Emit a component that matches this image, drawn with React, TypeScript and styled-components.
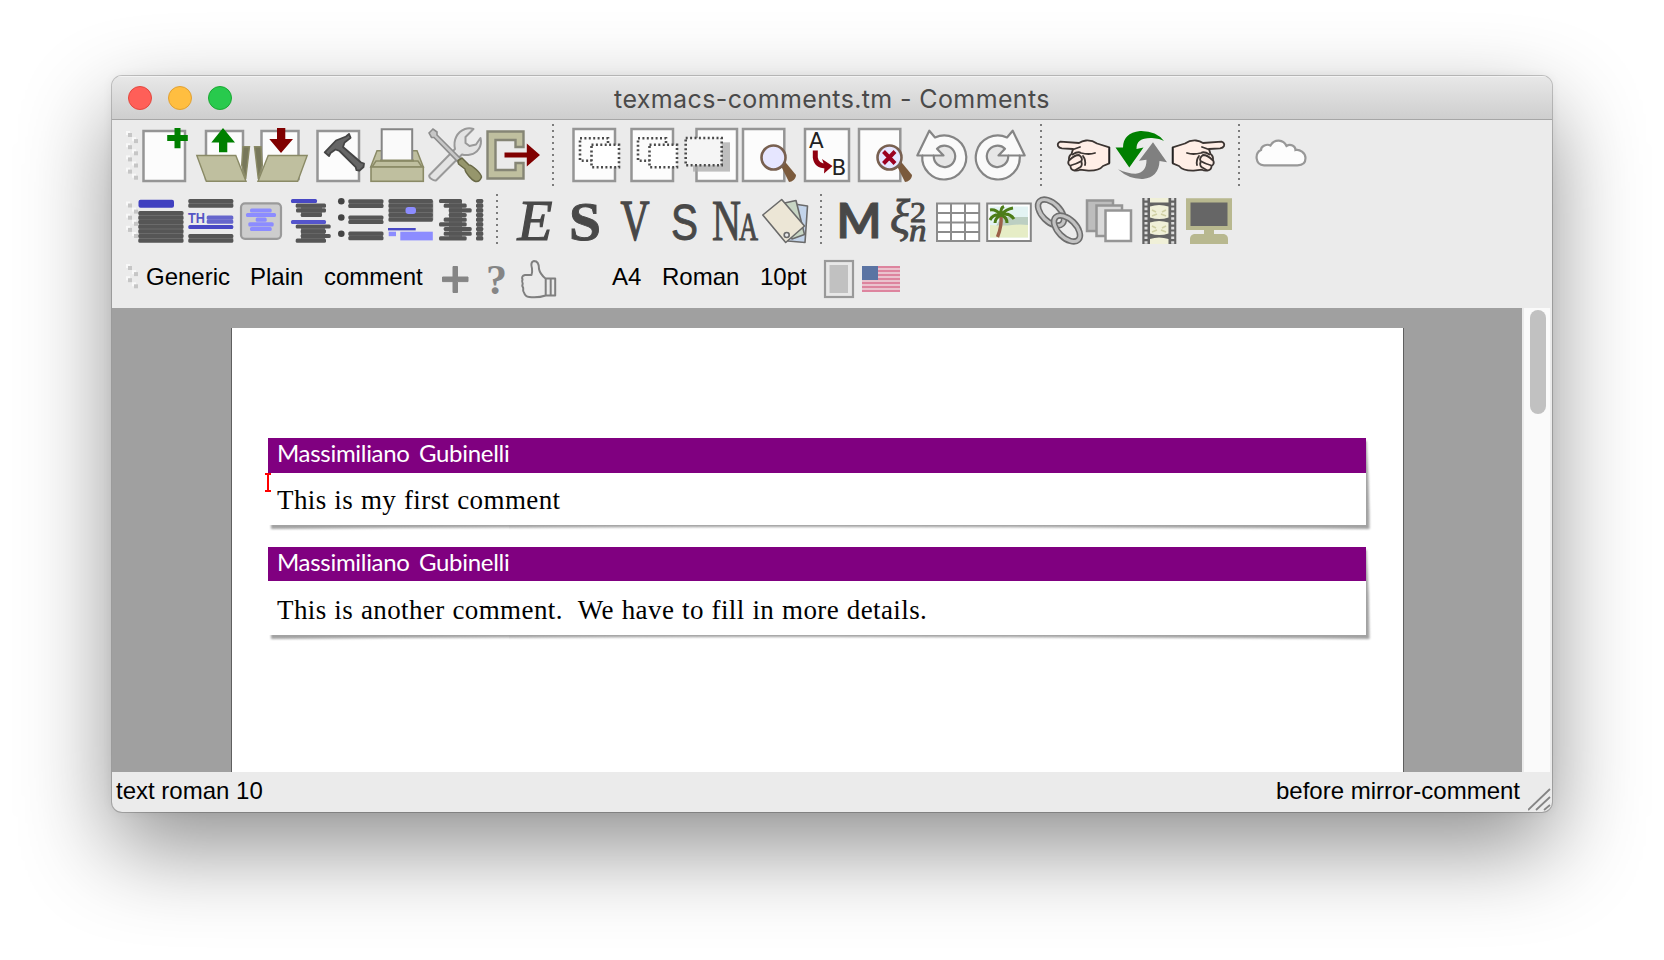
import React from 'react';
import styled, { createGlobalStyle } from 'styled-components';

const GlobalStyle = createGlobalStyle`
  body { margin: 0; background: #fff; }
  #root { height: 960px; overflow: hidden; }
  svg { display: block; flex: none; }
`;

const sans = `'Liberation Sans', Arial, sans-serif`;

const Desktop = styled.div`
  box-sizing: border-box;
  width: 1664px;
  height: 960px;
  padding: 76px 112px 0;
  overflow: hidden;
  background: #fff;
`;

const Window = styled.div`
  display: flex;
  flex-direction: column;
  width: 1440px;
  height: 736px;
  border-radius: 10px;
  overflow: hidden;
  background: #ebebeb;
  box-shadow: 0 0 0 1px rgba(0, 0, 0, 0.2), 0 36px 90px rgba(0, 0, 0, 0.44), 0 0 12px rgba(0, 0, 0, 0.06);
`;

const TitleBar = styled.div`
  flex: none;
  box-sizing: border-box;
  display: grid;
  grid-template-columns: 200px 1fr 200px;
  align-items: center;
  height: 44px;
  background: linear-gradient(#e8e8e8, #cecece);
  border-bottom: 1px solid #a6a6a6;
  box-shadow: inset 0 1px 0 #f3f3f3;
`;

const Lights = styled.div`
  display: flex;
  gap: 16px;
  padding-left: 16px;
`;

const Light = styled.span<{ $fill: string; $edge: string }>`
  box-sizing: border-box;
  width: 24px;
  height: 24px;
  border-radius: 50%;
  background: ${(p) => p.$fill};
  border: 1px solid ${(p) => p.$edge};
`;

const Title = styled.div`
  padding-top: 2px;
  text-align: center;
  white-space: nowrap;
  font: 400 25px/30px Inter, sans-serif;
  letter-spacing: 0.38px;
  color: #4a4a4a;
`;

const ToolRow = styled.div<{ $height: number; $icon: number }>`
  flex: none;
  box-sizing: border-box;
  display: flex;
  align-items: flex-start;
  height: ${(p) => p.$height}px;
  padding-top: 8px;
  svg.tool { width: ${(p) => p.$icon}px; height: ${(p) => p.$icon}px; overflow: visible; }
`;

const IconGroup = styled.div`
  display: flex;
  gap: 4px;
`;

const Divider = styled.div<{ $height: number }>`
  width: 2px;
  height: ${(p) => p.$height}px;
  margin: -4px 14px 0 12px;
  background: repeating-linear-gradient(#7c7c7c 0 2px, transparent 2px 6px);
`;

const MenuLabel = styled.div<{ $width: number }>`
  width: ${(p) => p.$width}px;
  font: 24px/34px ${sans};
  letter-spacing: 0;
  color: #000;
  white-space: nowrap;
`;

const Workspace = styled.div`
  flex: none;
  display: flex;
  height: 464px;
`;

const Canvas = styled.div`
  width: 1410px;
  box-sizing: border-box;
  padding: 20px 0 0 119px;
  background: #a0a0a0;
`;

const Page = styled.div`
  box-sizing: border-box;
  display: flex;
  flex-direction: column;
  gap: 22px;
  width: 1173px;
  height: 444px;
  padding: 110px 37px 0 36px;
  background: #fff;
  border: solid #5f5f5f;
  border-width: 0 1px;
`;

const Comment = styled.article<{ $height: number }>`
  position: relative;
  z-index: 0;
  height: ${(p) => p.$height}px;
`;

const Shade = styled.svg`
  position: absolute;
  z-index: -1;
  left: 0;
  top: 0;
  overflow: visible;
`;

const Author = styled.header<{ $height: number }>`
  box-sizing: border-box;
  height: ${(p) => p.$height}px;
  padding-left: 9px;
  background: #800080;
  color: #fff;
  font: 24px/30px Lato, sans-serif;
  letter-spacing: -0.3px;
  word-spacing: 3.5px;
`;

const Body = styled.div<{ $height: number; $padTop: number }>`
  box-sizing: border-box;
  height: ${(p) => p.$height}px;
  padding: ${(p) => p.$padTop}px 0 0 9px;
  background: #fff;
  color: #000;
  font: 27px/32px 'Liberation Serif', 'Times New Roman', serif;
  letter-spacing: 0.4px;
  word-spacing: 0.6px;
  white-space: pre;
`;

const Caret = styled.svg`
  position: absolute;
  left: -3px;
  top: 35px;
`;

const ScrollTrack = styled.div`
  width: 26px;
  box-sizing: border-box;
  margin-left: 2px;
  padding: 2px 4px 0 6px;
  background: #fafafa;
`;

const ScrollThumb = styled.div`
  width: 16px;
  height: 104px;
  border-radius: 8px;
  background: #c1c1c1;
`;

const StatusBar = styled.footer`
  flex: none;
  display: flex;
  justify-content: space-between;
  height: 40px;
  padding-left: 4px;
  font: 24px/38px ${sans};
  color: #000;
`;

const StatusRight = styled.div`
  display: flex;
  gap: 8px;
`;

const Tool = ({ size = 54, children }: { size?: number; children: React.ReactNode }) => (
  <svg className="tool" viewBox={`0 0 ${size} ${size}`}>{children}</svg>
);

const Grip = ({ rows, top }: { rows: number; top: number }) => (
  <svg width="26" height="54" viewBox="0 0 26 54">
    {Array.from({ length: rows }, (_, i) => {
      const x = i % 2 ? 22 : 16;
      const y = top + i * 6.1;
      return (
        <g key={i}>
          <rect x={x - 2} y={y - 2} width="4" height="4" fill="#f8f8f8" />
          <rect x={x} y={y} width="4" height="4" fill="#c6c6c6" />
        </g>
      );
    })}
  </svg>
);

const Sheet = ({ x = 5, y = 1.5, w = 42, h = 51.5, fill = '#fcfcfc' }) => (
  <rect x={x} y={y} width={w} height={h} fill={fill} stroke="#959595" strokeWidth="2.500" />
);

const khaki = '#bfbf9f';
const khakiEdge = '#8a8a66';

const NewIcon = () => (
  <Tool>
    <Sheet x={5.5} y={3} w={41.5} h={50} />
    <path d="M36.5 0h6v7h7.3v6h-7.3v7.3h-6V13h-7.3V7h7.3z" fill="#008000" />
  </Tool>
);

const Folder = () => (
  <g stroke={khakiEdge} strokeWidth="1.4">
    <path d="M47 18.7h6.5L49.7 51l-4-14z" fill="#77775a" />
    <path d="M.8 27.5h39L50 53.2H10.3z" fill={khaki} />
  </g>
);

const OpenIcon = () => (
  <Tool>
    <Sheet x={10} y={3} w={37} h={48} />
    <Folder />
    <path d="M27 0 39 14.5h-7.7v9.8H23v-9.8h-7.7z" fill="#008000" />
  </Tool>
);

const SaveIcon = () => (
  <Tool>
    <Sheet x={7.5} y={3} w={37} h={48} />
    <g transform="translate(54 0) scale(-1 1)"><Folder /></g>
    <path d="M23 0h8.3v11H39L27 25 15.3 11H23z" fill="#800000" />
  </Tool>
);

const BuildIcon = () => (
  <Tool>
    <Sheet x={5.5} y={3} w={41.5} h={50} />
    <path d="M12.7 24.3 24 12.5l10-4 3-2.6 1.6 4-6 4.6L31 19l18 15.500 3 1-.5 3.5-4 3.700-3-.5-.8-3L27.500 23l-4-1.500-5 3.500-1.500 3z" fill="#666" stroke="#454545" strokeWidth="1.8" strokeLinejoin="round" />
  </Tool>
);

const PrintIcon = () => (
  <Tool>
    <path d="M7 22.700h40L53.300 39H.7z" fill={khaki} stroke={khakiEdge} strokeWidth="1.500" />
    <path d="M6 33h42l4 6H2z" fill={khaki} stroke={khakiEdge} strokeWidth="1.500" />
    <path d="M11.700 33V1.200h30.500V33" fill="#fafafa" stroke="#858585" strokeWidth="2" />
    <path d="M10 32.500h34" stroke={khakiEdge} strokeWidth="2" />
    <rect x="1" y="39" width="52.300" height="14.300" fill={khaki} stroke={khakiEdge} strokeWidth="1.600" />
  </Tool>
);

const PrefsIcon = () => (
  <Tool>
    <path d="M1.500 47 27 21c-2-9 2-17 10-20 3-1 6-.8 8.500 0L37.500 9v6l4 3 6.500-1.500L52.500 10c2 8-3 15-10 16.500-3 .8-6 .8-8.500 0L8.500 52c-2 2-9-3-7-5z" fill="#e3e3e3" stroke="#999" strokeWidth="2" strokeLinejoin="round" />
    <path d="M1 5 5 1l4 3v3l25 25-3 3L6 9.500H3.500z" fill="#c6c6c6" stroke="#8c8c8c" strokeWidth="1.600" />
    <path d="M30 32.500 34 30l7 7c3 0 12 8 12.500 12-1 3-3 5-6 4.500C43 52 37 44 37 41l-6.500-5z" fill="#96966c" stroke="#696947" strokeWidth="1.500" strokeLinejoin="round" />
  </Tool>
);

const ExitIcon = () => (
  <Tool>
    <path d="M1.500 3.500h36V19h-8v-7H9.500v30h20v-7h8v15.500h-36z" fill={khaki} stroke="#858575" strokeWidth="2.400" />
    <path d="M18.500 24.500h22.300V15.500L54 27 40.800 38.500v-9H18.500z" fill="#800000" />
  </Tool>
);

const CopyIcon = () => (
  <Tool>
    <Sheet x={5.5} y={1} w={41.500} h={52} />
    <g strokeDasharray="2 2.400" strokeWidth="2.600" stroke="#4a4a4a">
      <rect x="12" y="10.200" width="28" height="22.500" fill="none" />
      <rect x="23.500" y="16.800" width="27.500" height="22.500" fill="#fff" />
    </g>
  </Tool>
);

const PasteIcon = () => (
  <Tool>
    <Sheet x={12.500} y={1} w={40.500} h={52} />
    <rect x="9" y="14.300" width="37" height="29.300" fill="#aaa" fillOpacity=".75" />
    <rect x="1.700" y="10" width="36" height="27.300" fill="#f5f5f5" stroke="#4a4a4a" strokeWidth="2.600" strokeDasharray="2 2.400" />
  </Tool>
);

const Lens = () => (
  <>
    <path d="m38 36 4-3.500L54 47c0 4-4 7-7 7z" fill="#7b5a3c" />
    <circle cx="31.500" cy="29.500" r="12" fill="#e6e6ff" stroke="#786050" strokeWidth="2.600" />
  </>
);

const FindIcon = () => (
  <Tool><Sheet x={1} y={1} w={41.300} h={52} /><Lens /></Tool>
);

const FindOffIcon = () => (
  <Tool>
    <Sheet x={1} y={1} w={41.300} h={52} />
    <Lens />
    <path d="m25.500 23.500 11.500 12m0-12-11.500 12" stroke="#9b0020" strokeWidth="4" />
  </Tool>
);

const ReplaceIcon = () => (
  <Tool>
    <Sheet x={5} y={1} w={44} h={52} />
    <text x="9" y="19.700" fontFamily="DejaVu Sans, sans-serif" fontSize="21.500" fill="#222">A</text>
    <text x="31.500" y="46.800" fontFamily="DejaVu Sans, sans-serif" fontSize="21.500" fill="#222">B</text>
    <path d="M15.300 22.500v7q1 8.500 11 8.500" fill="none" stroke="#900010" strokeWidth="5" />
    <path d="m22 31 10.500 7-8.500 7.500.5-7.500z" fill="#900010" />
  </Tool>
);

const Turn = () => (
  <g stroke="#858585" strokeWidth="2.200" strokeLinejoin="round">
    <path d="M13.300 2.700 19 9.500A22 22 0 1 1 6.300 27.500H1.300z" fill="#fafafa" />
    <path d="M21 20.700A10.700 10.700 0 1 1 17.800 27.500H27.500z" fill="#e6e6e6" />
    <path d="M6 27.500h12" />
  </g>
);

const UndoIcon = () => <Tool><Turn /></Tool>;
const RedoIcon = () => <Tool><g transform="translate(52 0) scale(-1 1)"><Turn /></g></Tool>;

const Hand = () => (
  <g stroke="#3c3532" strokeWidth="1.800" fill="#ffeee6" strokeLinejoin="round" strokeLinecap="round">
    <path d="M53.300 19.300 41 15.500Q36 12 30 12.500q-4 .5-7 2.500L4.500 13.700Q1 15 2 18q1 2 4 2.300L17 21l-1.500 5q-3 2-2.500 6-2 4 1.500 6 0 4 4 4.500 3 .5 5.500-.8l8.300 1Q43 43 47 38l6.300-2.700z" />
    <path d="M17 21.500 24 19m-7.500 7.500Q22 23 25 25q8 2 14 0M13.500 32q5-5 9.500-5 4 3 2.500 6-5 3-11 4.500M25.500 34q1 3-1 5l-5 3M27 28q3 4 2 9" fill="none" />
  </g>
);

const BackIcon = () => <Tool><Hand /><path d="M53.300 19.300v16" stroke="#222" strokeWidth="1.600" /></Tool>;
const ForwardIcon = () => (
  <Tool>
    <g transform="translate(54 0) scale(-1 1)"><Hand /><path d="M53.300 19.300v16" stroke="#222" strokeWidth="1.600" /></g>
  </Tool>
);

const RefreshIcon = () => (
  <Tool>
    <path d="M50 13Q42 2.500 26 3 9 5 9 19.500H1.500l13.800 20L29.500 19.500l-7 1.500Q22 9.500 38 10q8 .5 12 3z" fill="#008000" />
    <path d="M4 41.300Q15 51.500 29 51q16-2 16.500-18l7.500 1.200-14-20-14 18.500 7.500-1q0 13-11 14-8 0-17.500-4.400z" fill="#808080" />
  </Tool>
);

const CloudIcon = () => (
  <Tool>
    <path d="M10 37.300C1 37 .5 25 7 22c0-4 6-6.500 9.500-4.500 4-7 13-6 16 .5 4-2.500 9 0 9 4 4-1 10 2.500 10 8 0 5-3 7.300-8 7.300z" fill="#fdfdfd" stroke="#989898" strokeWidth="2.200" />
  </Tool>
);

type Bar = [number, number, number, string?];
const dark = '#565656';
const blue = '#4848c4';
const pale = '#8c8cff';

const Bars = ({ items }: { items: Bar[] }) => (
  <>
    {items.map(([x1, x2, y, fill = dark], i) => (
      <rect key={i} x={x1} y={y - 2.100} width={x2 - x1} height="4.200" rx="1.500" fill={fill} />
    ))}
  </>
);

const Block = ({ x = 0.8, y, w = 44.400, h }: { x?: number; y: number; w?: number; h: number }) => (
  <rect x={x} y={y} width={w} height={h} fill="#808080" />
);

const TitleIcon = () => (
  <Tool size={46}>
    <rect x=".5" y="1.800" width="35.500" height="8" rx="2" fill="#4040c0" />
    <Block y={15} h={28} />
    <Bars items={[15, 19.7, 24, 28.7, 33.3, 38, 42.7].map((y): Bar => [0.3, 45.5, y])} />
  </Tool>
);

const TheoremIcon = () => (
  <Tool size={46}>
    <Block y={3} h={5} /><Block y={38} h={5} />
    <Bars items={[[0.3, 45.300, 3], [0.3, 45.300, 7.700], [18.700, 45.300, 19.700, '#6666cc'], [18.700, 45.300, 23.700, '#6666cc'], [0.3, 45.300, 29, blue], [0.3, 45.300, 38], [0.3, 45.300, 42.700]]} />
    <text x="0" y="24.800" textLength="17" lengthAdjust="spacingAndGlyphs" fontFamily="Liberation Sans" fontWeight="700" fontSize="14.500" fill="#5555c4">TH</text>
  </Tool>
);

const CenterIcon = () => (
  <Tool size={46}>
    <rect x="3" y="5.300" width="40" height="35.500" rx="4" fill="#cdcdcd" stroke="#9a9a9a" strokeWidth="2.200" />
    <Bars items={[[12, 33.700, 12.500, pale], [8, 38, 17, pale], [17.700, 28.700, 21.700, pale], [10.300, 35.700, 26.300, pale], [12, 33.700, 31, pale]]} />
  </Tool>
);

const OutlineIcon = () => (
  <Tool size={46}>
    <rect x="13" y="7" width="21" height="10" fill="#777" />
    <rect x="13" y="28" width="24" height="14" fill="#777" />
    <Bars items={[[3, 29, 3, blue], [7.700, 38, 7.700], [8, 38, 12.300], [12.700, 34, 17], [3, 38, 24, '#5555cc'], [7.700, 42.700, 28.500], [12.700, 38, 33.300], [12.700, 42.700, 38], [7.700, 38, 42.700]]} />
  </Tool>
);

const ListIcon = () => (
  <Tool size={46}>
    {[3.300, 19.500, 35.700].map((y) => (
      <g key={y}>
        <circle cx="3.300" cy={y} r="3.300" fill="#444" />
        <Block x={11} w={34} y={y} h={5} />
        <Bars items={[[10.300, 45.500, y], [10.300, 45.500, y + 4.500]]} />
      </g>
    ))}
  </Tool>
);

const FigureIcon = () => (
  <Tool size={46}>
    <Block y={3} h={19} />
    <Bars items={[3, 7.700, 12.300, 17, 21.700].map((y): Bar => [0.5, 44.800, y])} />
    <rect x="17.500" y="9" width="10.500" height="7" rx="3" fill={pale} />
    <rect x="0" y="30" width="27.700" height="2.400" fill={blue} />
    <rect x=".7" y="33.700" width="7.300" height="4.500" fill={pale} />
    <rect x="12.300" y="33.700" width="32.500" height="8.700" fill={pale} />
  </Tool>
);

const MarginIcon = () => (
  <Tool size={46}>
    <rect x="11" y="3" width="13" height="37" fill="#777" />
    <rect x="39" y="3" width="5.500" height="37" fill="#888" />
    <Bars items={[[1, 24, 3], [5.700, 28.700, 7.700], [10.700, 33.700, 12.300], [10.700, 28.700, 17], [5.700, 28.700, 21.700], [1, 28.700, 26.300], [5.700, 33.700, 31], [5.700, 33.700, 35.700], [1, 28.700, 40.300], ...[3, 7.700, 12.300, 17, 21.700, 26.300, 31, 35.700, 40.300].map((y): Bar => [38, 45.300, y])]} />
  </Tool>
);

interface GlyphProps {
  text: string; x: number; width: number; size: number; y?: number;
  family?: string; weight?: number; slant?: string; bold?: number;
}
const Glyph = ({ text, x, width, size, y = 42, family = 'Liberation Serif', weight = 400, slant = 'normal', bold = 0.9 }: GlyphProps) => (
  <text x={x} y={y} textLength={width} lengthAdjust="spacingAndGlyphs" fontFamily={family} fontSize={size} fontWeight={weight} fontStyle={slant} fill="#484848" stroke="#484848" strokeWidth={bold}>{text}</text>
);

const TagsIcon = () => (
  <Tool size={46}>
    <g stroke="#6a6a6a" strokeWidth="1.600" strokeLinejoin="round">
      <path d="m32 6 13.500 2L43 44.500 26 43z" fill="#c3d4ea" />
      <path d="m18 6 16-3.500 8.500 34L30 41z" fill="#c8d6c4" />
      <path d="M.8 17 19.700 1.500 42.500 28 23.700 44.500z" fill="#ece6d6" />
      <circle cx="24.700" cy="37" r="2.500" fill="#ebebeb" />
    </g>
  </Tool>
);

const TableIcon = () => (
  <Tool size={46}>
    <path d="M1 5.500h42.200V43H1zM15 5v38M29 5v38M1 15h42M1 24.500h42M1 34h42" fill="#fff" stroke="#8c8c8c" strokeWidth="2" />
  </Tool>
);

const PictureIcon = () => (
  <Tool size={46}>
    <rect x="1.200" y="5.500" width="43.600" height="37.500" fill="#fff" stroke="#858585" strokeWidth="2" />
    <path d="M4 8.500h38v31H4z" fill="#e3f3f3" />
    <path d="M15 19h27v11H9z" fill="#bccfc2" />
    <path d="M4 27q15 1 22 0 8-1 16 0v12.500H4z" fill="#e6edc6" />
    <path d="M15 18q1 10-3.500 21" fill="none" stroke="#9c6048" strokeWidth="3.400" />
    <path d="M15 17Q10 11 4 12M15 17q-8-1-11 5m11-5q-6 3-6 8m6-8q-1-7 3-8.500M15 17q5-6 12-7M15 17q8-3 13 4M15 17q6 2 6 8" fill="none" stroke="#4d7d18" strokeWidth="3" />
  </Tool>
);

const LinkIcon = () => (
  <Tool size={46}>
    <g fill="none">
      {[[15, 14.500], [31, 30.500]].map(([x, y]) => (
        <g key={x} transform={`rotate(45 ${x} ${y})`}>
          <ellipse cx={x} cy={y} rx="16" ry="9" stroke="#6e6e6e" strokeWidth="6.400" />
          <ellipse cx={x} cy={y} rx="16" ry="9" stroke="#c2c2c2" strokeWidth="3.200" />
        </g>
      ))}
    </g>
  </Tool>
);

const PagesIcon = () => (
  <Tool size={46}>
    <Sheet x={1} y={2.500} w={26} h={30.500} fill="#bdbdbd" />
    <Sheet x={10.500} y={7.500} w={25.500} h={30.500} fill="#dadada" />
    <Sheet x={19.500} y={12.500} w={25.500} h={30.500} fill="#fff" />
  </Tool>
);

const FilmIcon = () => (
  <Tool size={46}>
    <rect x="6.300" y="0" width="34" height="46" fill="#636363" />
    <path d="M10 0v46M36.700 0v46" stroke="#dcdcdc" strokeWidth="3" strokeDasharray="2.600 2.200" />
    <path d="M14 0h18.500v4.500H14zM14 8.500q9-3 18.500 0v11q-9 3-18.500 0zM14 24.500q9-3 18.500 0v11q-9 3-18.500 0zM14 41q9-3 18.500 0v5H14z" fill="#f0f0d8" />
    <path d="m16 12 4 2m10-2-4 2m-10 4 5-2m9 2-5-2M16 28l4 2m10-2-4 2m-10 4 5-2m9 2-5-2" stroke="#d0d0a4" strokeWidth="1.600" />
  </Tool>
);

const ScreenIcon = () => (
  <Tool size={46}>
    <path d="M0 .3h46V32H28v4h10q4 1 4 5v5H4v-5q0-4 4-5h10v-4H0z" fill="#b8b88f" />
    <rect x="4.500" y="4.500" width="37" height="23.500" fill="#666" />
  </Tool>
);

const AddIcon = () => (
  <Tool size={38}><path d="M17 6.500h4.500v10.500H32v4.600H21.500V32.500H17V21.600H6.500V17H17z" fill="#858585" stroke="#858585" strokeLinejoin="round" /></Tool>
);

const HelpIcon = () => (
  <Tool size={38}>
    <text x="8" y="33.500" textLength="21" lengthAdjust="spacingAndGlyphs" fontFamily="Liberation Serif" fontWeight="700" fontSize="43" fill="#858585">?</text>
  </Tool>
);

const ThumbIcon = () => (
  <Tool size={38}>
    <path d="M25.500 18.500Q20 14 19 9q0-8-5-8-4 1-2 7.500.5 4-.5 6.500H5q-4 1-2.500 4.500-1 2 .2 4-1 2 .5 4.500-.5 3 1 5 1 3.500 5 4 9 1 16.500-1.500V18.500h9.500v17h-9.500m5-17v17" fill="none" stroke="#7f7f7f" strokeWidth="2" strokeLinejoin="round" />
  </Tool>
);

const PaperIcon = () => (
  <Tool size={38}>
    <rect x="5" y="1" width="28" height="36" fill="#e8e8e8" stroke="#999" strokeWidth="2.200" />
    <rect x="9.500" y="5" width="18.500" height="28" fill="#c1c1c1" />
  </Tool>
);

const FlagIcon = () => (
  <Tool size={38}>
    <rect y="6" width="38" height="26" fill="#eac3ce" />
    {[0, 1, 2, 3, 4, 5, 6].map((i) => <rect key={i} y={6 + i * 4} width="38" height="2" fill="#dd849e" />)}
    <rect y="6" width="16" height="14" fill="#5b74a3" />
  </Tool>
);

interface NoteProps { top: number; body: number; padTop: number; text: string; caret?: boolean }
const Note = ({ top, body, padTop, text, caret }: NoteProps) => {
  const h = top + body;
  return (
    <Comment $height={h}>
      <Shade width="1098" height={h}>
        <path d={`M3 ${h - 4}V${h + 4}Q549 ${h} 1101.500 ${h + 4}Q1101.500 ${h - 40} 1098.500 3H1090V${h - 4}z`} fill="#a2a2a2" filter="blur(.8px)" />
      </Shade>
      <Author $height={top}>Massimiliano Gubinelli</Author>
      <Body $height={body} $padTop={padTop}>{text}</Body>
      {caret && (
        <Caret width="6" height="19" viewBox="0 0 6 19">
          <path d="M0 1h6M0 18h6M3 0v19" stroke="#f00" strokeWidth="2" />
        </Caret>
      )}
    </Comment>
  );
};

export default function App() {
  return (
    <Desktop>
      <GlobalStyle />
      <Window>
        <TitleBar>
          <Lights>
            <Light $fill="#ff5f58" $edge="#e2483f" />
            <Light $fill="#ffbe40" $edge="#e0a033" />
            <Light $fill="#28ca4d" $edge="#1ba833" />
          </Lights>
          <Title>texmacs-comments.tm - Comments</Title>
        </TitleBar>

        <ToolRow $height={70} $icon={54}>
          <Grip rows={8} top={5} />
          <IconGroup>
            <NewIcon /><OpenIcon /><SaveIcon /><BuildIcon /><PrintIcon /><PrefsIcon /><ExitIcon />
          </IconGroup>
          <Divider $height={62} />
          <IconGroup>
            <CopyIcon /><CopyIcon /><PasteIcon /><FindIcon /><ReplaceIcon /><FindOffIcon /><UndoIcon /><RedoIcon />
          </IconGroup>
          <Divider $height={62} />
          <IconGroup><BackIcon /><RefreshIcon /><ForwardIcon /></IconGroup>
          <Divider $height={62} />
          <IconGroup><CloudIcon /></IconGroup>
        </ToolRow>

        <ToolRow $height={62} $icon={46}>
          <Grip rows={6} top={5.500} />
          <IconGroup>
            <TitleIcon /><TheoremIcon /><CenterIcon /><OutlineIcon /><ListIcon /><FigureIcon /><MarginIcon />
          </IconGroup>
          <Divider $height={50} />
          <IconGroup>
            <Tool size={46}><Glyph text="E" x={5.500} width={35} size={57} slant="italic" bold={1.2} /></Tool>
            <Tool size={46}><Glyph text="S" x={7} width={32} size={55} weight={700} y={41.500} /></Tool>
            <Tool size={46}><Glyph text="V" x={8.500} width={29} size={56} bold={1.3} /></Tool>
            <Tool size={46}><Glyph text="S" x={9} width={27} size={50} family="Liberation Sans" y={41.500} /></Tool>
            <Tool size={46}>
              <Glyph text="N" x={0} width={29} size={56} />
              <Glyph text="A" x={27} width={19} size={40} bold={1.1} />
            </Tool>
            <TagsIcon />
          </IconGroup>
          <Divider $height={50} />
          <IconGroup>
            <Tool size={46}><Glyph text="M" x={0.5} width={45} size={47} weight={700} family="Lato" y={40.300} /></Tool>
            <Tool size={46}>
              <Glyph text="ξ" x={4} width={20} size={48} slant="italic" y={35} />
              <Glyph text="2" x={24} width={16} size={30} y={23.500} />
              <Glyph text="n" x={23} width={17.500} size={32} slant="italic" y={43} />
            </Tool>
            <TableIcon /><PictureIcon /><LinkIcon /><PagesIcon /><FilmIcon /><ScreenIcon />
          </IconGroup>
        </ToolRow>

        <ToolRow $height={56} $icon={38}>
          <Grip rows={4} top={6} />
          <MenuLabel $width={8} />
          <MenuLabel $width={104}>Generic</MenuLabel>
          <MenuLabel $width={74}>Plain</MenuLabel>
          <MenuLabel $width={112}>comment</MenuLabel>
          <IconGroup><AddIcon /><HelpIcon /><ThumbIcon /></IconGroup>
          <MenuLabel $width={54} />
          <MenuLabel $width={50}>A4</MenuLabel>
          <MenuLabel $width={98}>Roman</MenuLabel>
          <MenuLabel $width={60}>10pt</MenuLabel>
          <IconGroup><PaperIcon /><FlagIcon /></IconGroup>
        </ToolRow>

        <Workspace>
          <Canvas>
            <Page>
              <Note top={35} body={52} padTop={11} text="This is my first comment" caret />
              <Note top={34} body={54} padTop={12.500} text="This is another comment.  We have to fill in more details." />
            </Page>
          </Canvas>
          <ScrollTrack><ScrollThumb /></ScrollTrack>
        </Workspace>

        <StatusBar>
          <span>text roman 10</span>
          <StatusRight>
            <span>before mirror-comment</span>
            <svg width="24" height="40" viewBox="0 0 24 40">
              <path d="M0 38 22 17M8 38l14-13M16 38l6-5" stroke="#858585" strokeWidth="1.800" />
            </svg>
          </StatusRight>
        </StatusBar>
      </Window>
    </Desktop>
  );
}
